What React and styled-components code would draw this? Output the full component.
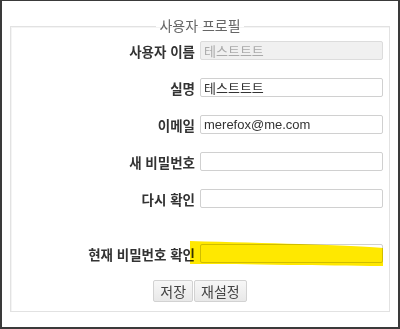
import React from 'react';
import styled, { createGlobalStyle } from 'styled-components';

const GlobalStyle = createGlobalStyle`
  html, body {
    margin: 0;
    padding: 0;
    background: #fff;
  }
  body {
    font-family: "Liberation Sans", "Noto Sans CJK KR", sans-serif;
  }
`;

// outer window frame
const Frame = styled.div`
  box-sizing: border-box;
  width: 400px;
  height: 329px;
  border-top: 1px solid #3a3a3a;
  border-left: 2px solid #3a3a3a;
  border-right: 2px solid #3a3a3a;
  border-bottom: 2px solid #3a3a3a;
  padding-top: 17px;
  background: #fff;
`;

const Fieldset = styled.fieldset`
  margin: 0 8px;
  padding: 7px 0 9px 0;
  border: 1px solid #e2e2e2;
  box-shadow: inset 1px 1px 0 #f4f4f4;
`;

const Legend = styled.legend`
  margin: 0 auto;
  padding: 0 3px;
  font-size: 14px;
  color: #666;
  line-height: 16px;
`;

const Row = styled.div`
  display: flex;
  align-items: center;
  height: 19px;
  margin-top: ${p => p.$gap || 18}px;
  &:first-of-type {
    margin-top: 0;
  }
`;

const Label = styled.label`
  flex: 0 0 189px;
  padding-right: 5px;
  box-sizing: border-box;
  text-align: right;
  font-size: 13.5px;
  font-weight: bold;
  color: #333;
  white-space: nowrap;
`;

const InputWrap = styled.div`
  position: relative;
  width: 183px;
  height: 19px;
`;

const Input = styled.input`
  box-sizing: border-box;
  width: 100%;
  height: 100%;
  margin: 0;
  padding: 0 3px;
  border: 1px solid #d0d0d0;
  border-radius: 2px;
  font-family: "Liberation Sans", "Noto Sans CJK KR", sans-serif;
  font-size: 13px;
  color: #333;
  background: ${p => (p.disabled ? '#f0f0f0' : '#fff')};
  &:disabled {
    color: #aaa;
    border-color: #dcdcdc;
  }
`;

const Highlight = styled.svg`
  position: absolute;
  left: -11px;
  top: -3px;
  width: 196px;
  height: 27px;
  pointer-events: none;
  mix-blend-mode: multiply;
`;

const Buttons = styled.div`
  display: flex;
  justify-content: center;
  gap: 1px;
  margin-top: 17px;
`;

const Button = styled.button`
  height: 22px;
  padding: 0 6px;
  margin: 0;
  border: 1px solid #d2d2d2;
  border-radius: 2px;
  background: linear-gradient(#f7f7f7, #e8e8e8);
  font-family: "Liberation Sans", "Noto Sans CJK KR", sans-serif;
  font-size: 14px;
  color: #444;
`;

const fields = [
  { label: '사용자 이름', value: '테스트트트', disabled: true },
  { label: '실명', value: '테스트트트' },
  { label: '이메일', value: 'merefox@me.com' },
  { label: '새 비밀번호', value: '', type: 'password' },
  { label: '다시 확인', value: '', type: 'password' },
];

const App = () => (
  <Frame>
    <GlobalStyle />
    <Fieldset>
      <Legend>사용자 프로필</Legend>
      {fields.map(f => (
        <Row key={f.label}>
          <Label>{f.label}</Label>
          <InputWrap>
            <Input type={f.type || 'text'} defaultValue={f.value} disabled={f.disabled} />
          </InputWrap>
        </Row>
      ))}
      <Row $gap={36}>
        <Label>현재 비밀번호 확인</Label>
        <InputWrap>
          <Input type="password" />
          <Highlight viewBox="0 0 196 27">
            <path
              d="M1 0 C40 1 80 2 110 3 C150 4 180 6 194 7 L194 25 C160 25 130 24 100 24 C60 23 30 23 1 23 Z"
              fill="#ffe800"
            />
          </Highlight>
        </InputWrap>
      </Row>
      <Buttons>
        <Button>저장</Button>
        <Button>재설정</Button>
      </Buttons>
    </Fieldset>
  </Frame>
);

export default App;
